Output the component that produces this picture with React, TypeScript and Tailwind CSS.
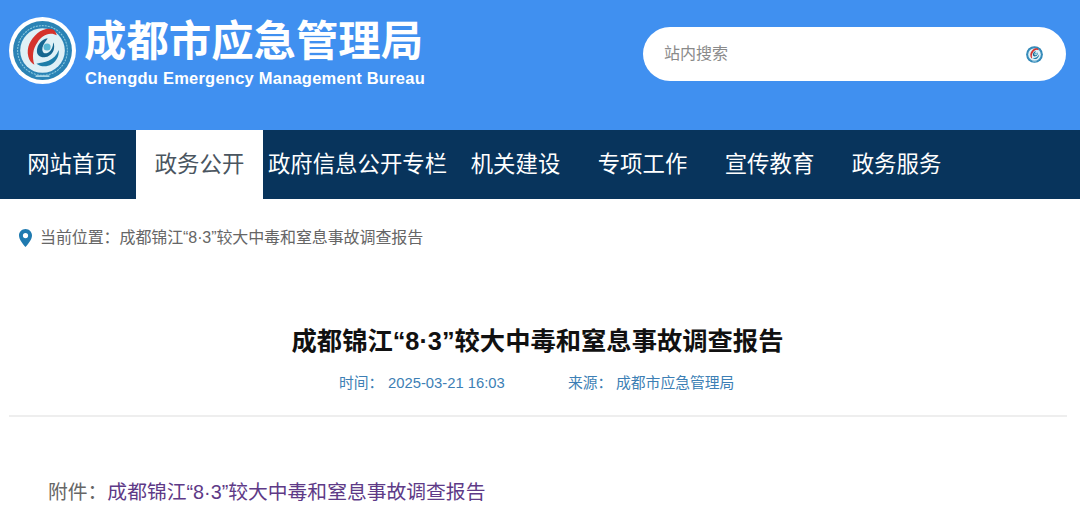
const cjk = "font-['Liberation_Sans','Noto_Sans_CJK_SC',sans-serif]";

const navItems = [
  { label: "网站首页", width: "w-[128px]" },
  { label: "政务公开", width: "w-[127px]", active: true },
  { label: "政府信息公开专栏", width: "w-[189px]" },
  { label: "机关建设", width: "w-[127px]" },
  { label: "专项工作", width: "w-[127px]" },
  { label: "宣传教育", width: "w-[127px]" },
  { label: "政务服务", width: "w-[127px]" },
];

// Round emblem, also used small inside the search box
function Emblem({ size }: { size: number }) {
  return (
    <svg width={size} height={size} viewBox="0 0 66 66" className="shrink-0">
      <circle cx="33" cy="33" r="33" fill="#ffffff" />
      <circle cx="33" cy="33" r="29" fill="#2a83b5" />
      <circle cx="33" cy="33" r="24.500" fill="none" stroke="#8ccbe0" strokeWidth="1" strokeDasharray="2 1" />
      <circle cx="33" cy="33" r="22" fill="#dff0f6" />
      <path
        d="M44 12.500c-5-2-11-.5-16 3.500-7 6-11 14-9 23 1 4 3 6.500 6 8-2.500-8-1.500-16 3-22 3-5 8-8 13-8.500 2-.2 4 .5 6 1.500-.5-2.500-1.500-4.500-3-5.500z"
        fill="#d5322c"
      />
      <path
        d="M27 46c4 3 10 3.500 15 .5 5-3 7.500-8.500 7-14-2 5-5 8.500-10 10.500-4 1.500-8 2-12 3z"
        fill="#1d7da8"
      />
      <path
        d="M38 21c-6 1-10 6-10.500 12-.3 5 4 7.500 8.500 6.500 5-1 8.500-5 8.500-10.500 0-1.500-.3-3-1-4 0 4-1.500 7.500-4 9.500-2 1.500-5 2-6 0-1.500-2.500-.5-6 1.500-9 1-1.500 2.500-3 3-4.500z"
        fill="#15668f"
      />
      <circle cx="37.500" cy="29.500" r="3.500" fill="#58b8d4" />
      <rect x="26" y="57.500" width="14" height="1.500" rx="0.750" fill="#a6d4e6" />
    </svg>
  );
}

export default function App() {
  return (
    <div className={`w-[1080px] h-[520px] overflow-hidden bg-white ${cjk}`}>
      <header className="h-[130px] bg-[#4090f0] flex items-start">
        <div className="ml-[9px] mt-[17px]">
          <Emblem size={67} />
        </div>
        <div className="ml-[8px] mt-[15px] text-white">
          <div className="text-[42.4px] leading-[54px] font-bold whitespace-nowrap">成都市应急管理局</div>
          <div className="ml-px text-[16.5px] leading-[18px] font-bold tracking-[0.23px] whitespace-nowrap">
            Chengdu Emergency Management Bureau
          </div>
        </div>
        <div className="ml-auto mr-[14px] mt-[27px] w-[423px] h-[54px] rounded-full bg-white flex items-center pl-[21px] pr-[22px]">
          <span className="text-[16px] text-[#8a8a8a]">站内搜索</span>
          <span className="ml-auto flex">
            <Emblem size={19} />
          </span>
        </div>
      </header>

      <nav className="h-[69px] bg-[#08345c] flex pl-[8px]">
        {navItems.map((item) => (
          <div
            key={item.label}
            className={`${item.width} flex items-center justify-center text-[22.4px] whitespace-nowrap ${
              item.active ? "bg-white text-[#4a5560]" : "text-white"
            }`}
          >
            {item.label}
          </div>
        ))}
      </nav>

      <div className="mt-[29px] ml-[19px] flex items-center h-[20px]">
        <svg width="13" height="18" viewBox="0 0 13 18">
          <path
            fillRule="evenodd"
            d="M6.500 0C2.900 0 0 2.900 0 6.400 0 10.500 4.200 15.200 6.500 18 8.800 15.200 13 10.500 13 6.400 13 2.900 10.100 0 6.500 0zm0 4a2.600 2.600 0 1 1 0 5.200 2.600 2.600 0 0 1 0-5.200z"
            fill="#1f7ab0"
          />
        </svg>
        <span className="ml-[8px] text-[16px] tracking-[-0.1px] text-[#666666] whitespace-nowrap">
          当前位置：成都锦江“8·3”较大中毒和窒息事故调查报告
        </span>
      </div>

      <h1 className="mt-[78px] pr-[5px] text-center text-[25.3px] leading-[30px] font-bold text-[#111111] whitespace-nowrap">
        成都锦江“8·3”较大中毒和窒息事故调查报告
      </h1>

      <div className="mt-[17px] ml-[339px] flex text-[14.8px] leading-[20px] text-[#3d7fb5] whitespace-nowrap">
        <span className="w-[49px]">时间：</span>
        <span className="w-[180px]">2025-03-21 16:03</span>
        <span className="w-[48px]">来源：</span>
        <span>成都市应急管理局</span>
      </div>

      <div className="mt-[22px] ml-[9px] mr-[13px] h-[2px] bg-[#eeeeee]" />

      <div className="mt-[62px] ml-[48px] text-[19.8px] leading-[26px] whitespace-nowrap">
        <span className="text-[#666666]">附件：</span>
        <span className="text-[#5e3a87]">成都锦江“8·3”较大中毒和窒息事故调查报告</span>
      </div>
    </div>
  );
}
